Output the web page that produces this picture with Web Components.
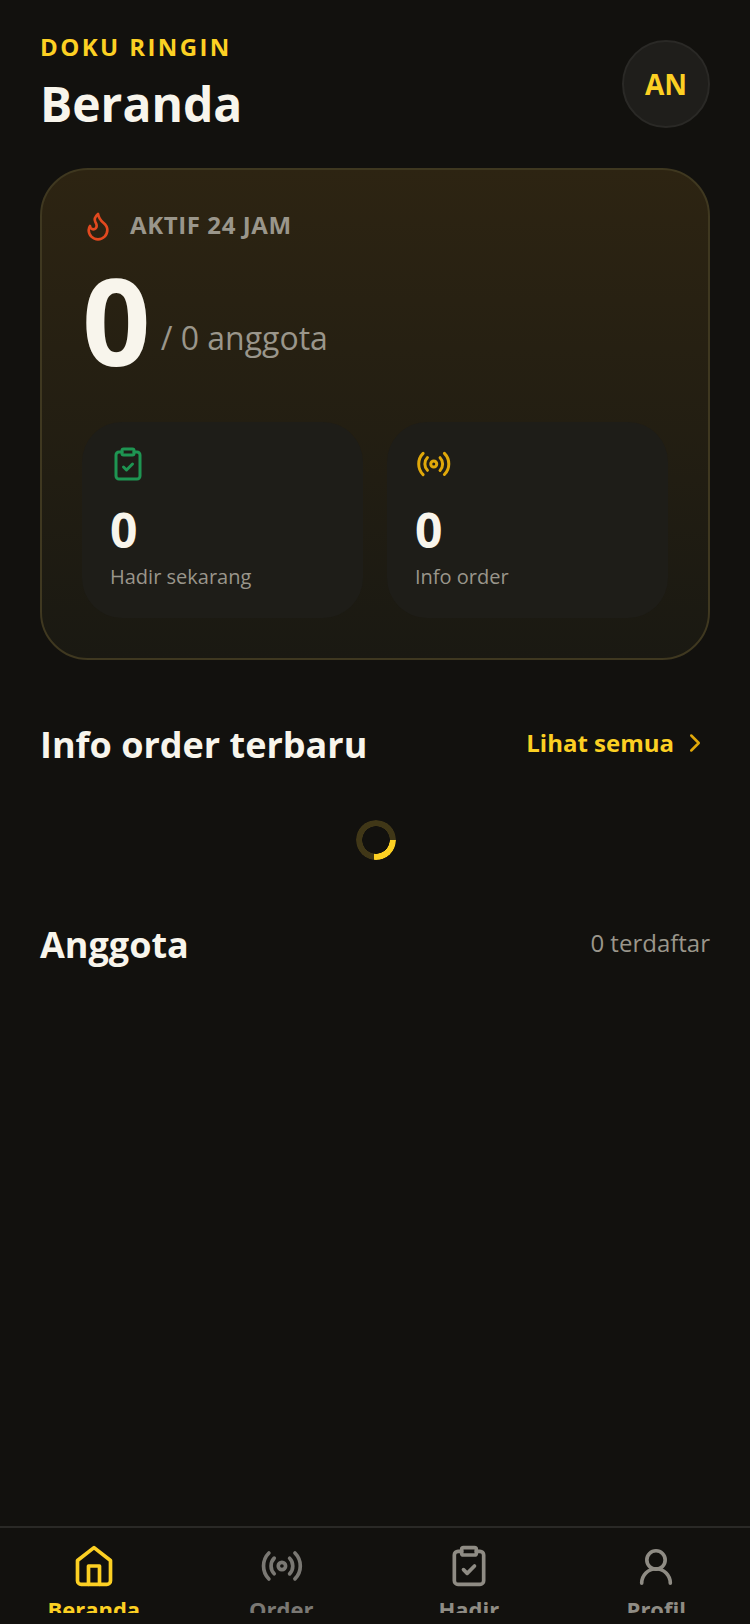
<!DOCTYPE html>
<html lang="id">
<head>
<meta charset="utf-8">
<title>Beranda</title>
<style>
    html, body {
        margin: 0;
        padding: 0;
        height: 100%;
        background: #12110e;
        font-family: "Open Sans", sans-serif;
    }
    body {
        display: flex;
        flex-direction: column;
        height: 1624px;
        overflow: hidden;
    }
</style>
</head>
<body>
<home-screen>
    <page-header slot="header" brand="DOKU RINGIN" title="Beranda" initials="AN"></page-header>
    <active-card total="0" members="0" hadir="0" orders="0"></active-card>
    <section-title heading="Info order terbaru" link="Lihat semua"></section-title>
    <load-spinner></load-spinner>
    <section-title heading="Anggota" note="0 terdaftar"></section-title>
</home-screen>
<bottom-nav></bottom-nav>

<script>
const icons = {
    clipboard: `<rect x="8" y="2" width="8" height="4" rx="1"/><path d="M16 4h2a2 2 0 0 1 2 2v14a2 2 0 0 1-2 2H6a2 2 0 0 1-2-2V6a2 2 0 0 1 2-2h2"/><path d="m9 14 2 2 4-4"/>`,
    radio: `<g transform="translate(.5 0)"><path d="M4.900 19.100C1 15.200 1 8.800 4.900 4.900"/><path d="M7.800 16.200c-2.300-2.300-2.300-6.100 0-8.500"/><circle cx="12" cy="12" r="2"/><path d="M16.200 7.800c2.300 2.300 2.300 6.100 0 8.500"/><path d="M19.100 4.900C23 8.800 23 15.100 19.100 19"/></g>`,
    home: `<path d="m3 9 9-7 9 7v11a2 2 0 0 1-2 2H5a2 2 0 0 1-2-2z"/><path d="M9 22V12h6v10"/>`,
    user: `<circle cx="12" cy="8.700" r="5"/><path d="M4.200 21.300c0-4.300 3.500-7.800 7.800-7.800s7.800 3.500 7.800 7.800"/>`,
    flame: `<path d="M8.500 14.500A2.500 2.500 0 0 0 11 12c0-1.380-.5-2-1-3-1.072-2.143-.224-4.054 2-6 .5 2.500 2 4.900 4 6.500 2 1.600 3 3.500 3 5.500a7 7 0 1 1-14 0c0-1.153.433-2.294 1-3a2.500 2.500 0 0 0 2.500 2.500z"/>`
};

function iconSvg(name, size, color, width) {
    return `<svg width="${size}" height="${size}" viewBox="0 0 24 24" fill="none" stroke="${color}" stroke-width="${width}" stroke-linecap="round" stroke-linejoin="round">${icons[name]}</svg>`;
}

class HomeScreen extends HTMLElement {
    constructor() {
        super();
        this.attachShadow({mode: "open"}).innerHTML = `
        <style>
            :host {
                display: flex;
                flex-direction: column;
                flex: 1;
                padding: 30px 40px 0;
                min-height: 0;
            }
        </style>
        <slot name="header"></slot>
        <slot></slot>
        `;
    }
}

class PageHeader extends HTMLElement {
    connectedCallback() {
        this.attachShadow({mode: "open"}).innerHTML = `
        <style>
            :host {
                display: flex;
                align-items: flex-start;
                justify-content: space-between;
                margin-bottom: 30px;
            }
            .brand {
                font-size: 24px;
                font-weight: 700;
                letter-spacing: 2.4px;
                line-height: 33px;
                color: #fcd023;
            }
            h1 {
                margin: 8px 0 1px;
                font-size: 48px;
                font-weight: 700;
                line-height: 66px;
                color: #f8f5ec;
            }
            .avatar {
                width: 84px;
                height: 84px;
                margin-top: 10px;
                border: 2px solid #2a2926;
                border-radius: 50%;
                background: #1f1e1b;
                color: #fcd023;
                font-size: 28px;
                font-weight: 700;
                display: flex;
                align-items: center;
                justify-content: center;
            }
        </style>
        <div>
            <div class="brand">${this.getAttribute("brand")}</div>
            <h1>${this.getAttribute("title")}</h1>
        </div>
        <div class="avatar">${this.getAttribute("initials")}</div>
        `;
    }
}

class StatTile extends HTMLElement {
    connectedCallback() {
        this.attachShadow({mode: "open"}).innerHTML = `
        <style>
            :host {
                display: block;
                flex: 1;
                box-sizing: border-box;
                height: 196px;
                padding: 24px 28px;
                border-radius: 40px;
                background: #1e1d18;
            }
            svg { display: block; }
            .num {
                margin-top: 16px;
                font-size: 48px;
                font-weight: 700;
                line-height: 64px;
                color: #f8f5ec;
            }
            .label {
                font-size: 20px;
                line-height: 30px;
                color: #9a968b;
            }
        </style>
        ${iconSvg(this.getAttribute("icon"), 36, this.getAttribute("color"), 2)}
        <div class="num">${this.getAttribute("value")}</div>
        <div class="label">${this.getAttribute("label")}</div>
        `;
    }
}

class ActiveCard extends HTMLElement {
    connectedCallback() {
        this.attachShadow({mode: "open"}).innerHTML = `
        <style>
            :host {
                display: block;
                box-sizing: border-box;
                height: 492px;
                padding: 40px;
                border: 2px solid #3f3820;
                border-radius: 48px;
                background: linear-gradient(180deg, #2d2412 0%, #1a1912 100%);
            }
            .top {
                display: flex;
                align-items: center;
                gap: 16px;
                height: 32px;
                font-size: 24px;
                font-weight: 700;
                letter-spacing: 0.6px;
                color: #9a968b;
            }
            .top span { margin-bottom: 4px; }
            .total {
                display: flex;
                align-items: flex-end;
                gap: 10px;
                margin-top: 18px;
            }
            .big {
                font-size: 120px;
                font-weight: 700;
                line-height: 120px;
                color: #f8f5ec;
            }
            .of {
                font-size: 32px;
                line-height: 44px;
                padding-bottom: 20px;
                color: #9a968b;
            }
            .tiles {
                display: flex;
                gap: 24px;
                margin-top: 42px;
            }
        </style>
        <div class="top">${iconSvg("flame", 32, "#e2491f", 2)}<span>AKTIF 24 JAM</span></div>
        <div class="total"><span class="big">${this.getAttribute("total")}</span><span class="of">/ ${this.getAttribute("members")} anggota</span></div>
        <div class="tiles">
            <stat-tile icon="clipboard" color="#1e9552" value="${this.getAttribute("hadir")}" label="Hadir sekarang"></stat-tile>
            <stat-tile icon="radio" color="#e0a80a" value="${this.getAttribute("orders")}" label="Info order"></stat-tile>
        </div>
        `;
    }
}

class SectionTitle extends HTMLElement {
    connectedCallback() {
        const link = this.getAttribute("link");
        const note = this.getAttribute("note");
        this.attachShadow({mode: "open"}).innerHTML = `
        <style>
            :host {
                display: flex;
                align-items: center;
                justify-content: space-between;
                height: 50px;
                margin-top: 59px;
            }
            h2 {
                margin: 0;
                font-size: 36px;
                font-weight: 700;
                color: #f8f5ec;
            }
            .link {
                display: flex;
                align-items: center;
                gap: 6px;
                margin-bottom: 4px;
                font-size: 24px;
                font-weight: 700;
                color: #fcd023;
            }
            .link svg { margin-top: 2px; }
            .note {
                margin-bottom: 4px;
                font-size: 24px;
                color: #9a968b;
            }
        </style>
        <h2>${this.getAttribute("heading")}</h2>
        ${link ? `<div class="link">${link}<svg width="30" height="30" viewBox="0 0 24 24" fill="none" stroke="#e0a80a" stroke-width="2" stroke-linecap="round" stroke-linejoin="round"><path d="m9 18 6-6-6-6"/></svg></div>` : ""}
        ${note ? `<div class="note">${note}</div>` : ""}
        `;
    }
}

class LoadSpinner extends HTMLElement {
    constructor() {
        super();
        this.attachShadow({mode: "open"}).innerHTML = `
        <style>
            :host {
                display: flex;
                justify-content: center;
                margin-top: 51px;
            }
            .ring {
                width: 40px;
                height: 40px;
                margin-left: 2px;
                border-radius: 50%;
                background: conic-gradient(from 90deg, #fcd023 0 27%, #403717 27% 100%);
                -webkit-mask: radial-gradient(circle, transparent 13.500px, #000 14px);
                mask: radial-gradient(circle, transparent 13.500px, #000 14px);
            }
        </style>
        <div class="ring"></div>
        `;
    }
}

class NavItem extends HTMLElement {
    connectedCallback() {
        const color = this.getAttribute("color");
        this.attachShadow({mode: "open"}).innerHTML = `
        <style>
            :host {
                display: flex;
                flex-direction: column;
                align-items: center;
                flex: 1;
                overflow: hidden;
                color: ${color};
            }
            svg { display: block; flex: none; }
            .label {
                margin-top: 6px;
                font-size: 22px;
                font-weight: 700;
                line-height: 30px;
            }
        </style>
        ${iconSvg(this.getAttribute("icon"), 44, color, 2)}
        <div class="label">${this.getAttribute("label")}</div>
        `;
    }
}

class BottomNav extends HTMLElement {
    constructor() {
        super();
        this.attachShadow({mode: "open"}).innerHTML = `
        <style>
            :host {
                display: block;
                flex: none;
                box-sizing: border-box;
                height: 98px;
                padding: 16px 0 11px;
                border-top: 2px solid #2a2926;
                background: #12110e;
            }
            .row {
                display: flex;
                height: 100%;
                overflow: hidden;
            }
        </style>
        <div class="row">
            <nav-item icon="home" label="Beranda" color="#fcd023"></nav-item>
            <nav-item icon="radio" label="Order" color="#7a7873"></nav-item>
            <nav-item icon="clipboard" label="Hadir" color="#8f8c84"></nav-item>
            <nav-item icon="user" label="Profil" color="#8f8c84"></nav-item>
        </div>
        `;
    }
}

customElements.define("home-screen", HomeScreen);
customElements.define("page-header", PageHeader);
customElements.define("stat-tile", StatTile);
customElements.define("active-card", ActiveCard);
customElements.define("section-title", SectionTitle);
customElements.define("load-spinner", LoadSpinner);
customElements.define("nav-item", NavItem);
customElements.define("bottom-nav", BottomNav);
</script>
</body>
</html>
